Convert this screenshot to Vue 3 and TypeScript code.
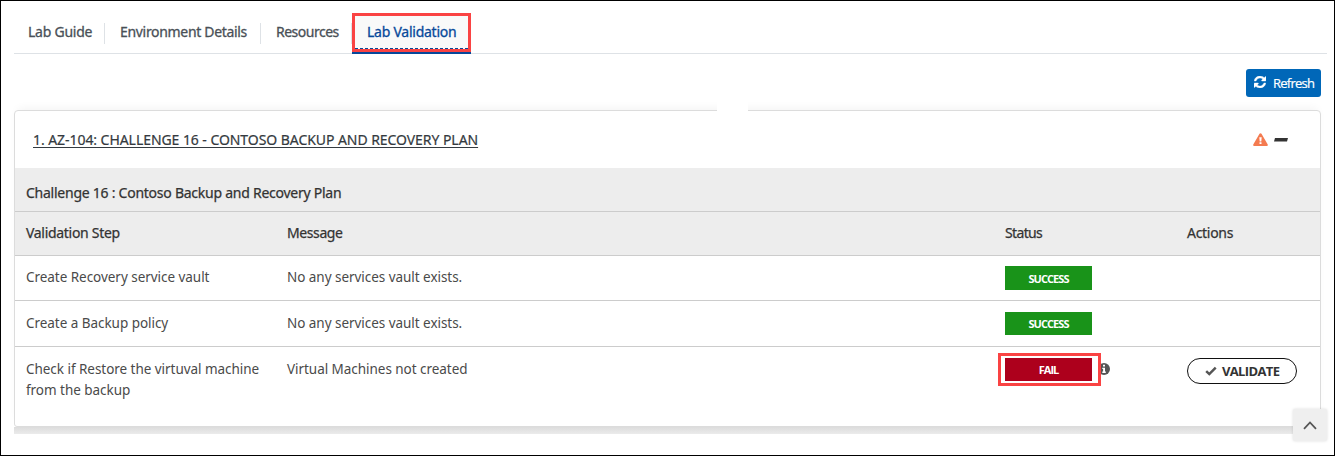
<script setup lang="ts">
interface Step {
  name: string
  message: string
  status: 'SUCCESS' | 'FAIL'
}

const tabs: { label: string; kind: string }[] = [
  { label: 'Lab Guide', kind: 'guide' },
  { label: 'Environment Details', kind: 'environment' },
  { label: 'Resources', kind: 'resources' },
  { label: 'Lab Validation', kind: 'active' },
]

const steps: Step[] = [
  { name: 'Create Recovery service vault', message: 'No any services vault exists.', status: 'SUCCESS' },
  { name: 'Create a Backup policy', message: 'No any services vault exists.', status: 'SUCCESS' },
  { name: 'Check if Restore the virtuval machine from the backup', message: 'Virtual Machines not created', status: 'FAIL' },
]
</script>

<template>
  <div class="page">
    <nav class="tabs">
      <a v-for="tab in tabs" :key="tab.kind" class="tab" :class="tab.kind"><span>{{ tab.label }}</span></a>
    </nav>

    <div class="toolbar">
      <button class="refresh">
        <svg width="12" height="12" viewBox="0 0 1536 1536" fill="#fff" stroke="#fff" stroke-width="50">
          <path d="M1511 928q0 5-1 7-64 268-268 434.500T764 1536q-146 0-282.500-55T238 1324l-129 129q-19 19-45 19t-45-19-19-45V960q0-26 19-45t45-19h448q26 0 45 19t19 45-19 45l-137 137q71 66 161 102t187 36q134 0 250-65t186-179q11-17 53-117 8-23 30-23h192q13 0 22.500 9.500t9.500 22.500zM1536 128v448q0 26-19 45t-45 19h-448q-26 0-45-19t-19-45 19-45l138-138Q969 256 768 256q-134 0-250 65T332 500q-11 17-53 117-8 23-30 23H50q-13 0-22.500-9.500T18 608v-7q65-268 270-434.500T768 0q146 0 284 55.500T1297 212l130-129q19-19 45-19t45 19 19 45z" />
        </svg>
        <span>Refresh</span>
      </button>
    </div>

    <section class="card">
      <header class="heading">
        <a class="title">1. AZ-104: CHALLENGE 16 - CONTOSO BACKUP AND RECOVERY PLAN</a>
        <svg class="warning" width="15" height="13" viewBox="0 0 15 13">
          <path d="M7.5.2c.5 0 .8.2 1 .6l6.100 10.500c.5.8 0 1.600-.9 1.600H1.300c-.9 0-1.400-.8-.9-1.600L6.500.8c.2-.4.5-.6 1-.6z" fill="#f47b50" />
          <path d="M6.300 4.200h2.400l-.4 4.200H6.700zM6.500 9.200h2v1.900h-2z" fill="#fff" />
        </svg>
        <svg class="minus" width="14" height="4" viewBox="0 0 14 4">
          <path d="M1 0h13l-1 3.500H0z" fill="#333" />
        </svg>
      </header>
      <div class="group"><span>Challenge 16 : Contoso Backup and Recovery Plan</span></div>
      <div class="row columns">
        <span class="h-step">Validation Step</span>
        <span class="h-message">Message</span>
        <span class="h-status">Status</span>
        <span class="h-actions">Actions</span>
      </div>
      <div v-for="step in steps" :key="step.name" class="row" :class="step.status.toLowerCase()">
        <span class="name">{{ step.name }}</span>
        <span class="message">{{ step.message }}</span>
        <div class="status">
          <span class="badge"><span>{{ step.status }}</span></span>
          <template v-if="step.status === 'FAIL'">
            <svg class="info" width="12" height="12" viewBox="0 0 12 12">
              <circle cx="6" cy="6" r="6" fill="#555" />
              <path d="M5 1.800h2v1.700H5zM4.300 4.700H7v3.700h.8v1.500H4.300V8.400h.8V6.100h-.8z" fill="#fff" />
            </svg>
            <i class="fail-outline"></i>
          </template>
        </div>
        <div class="actions">
          <button v-if="step.status === 'FAIL'" class="validate">
            <svg width="12" height="10" viewBox="0 0 12 10">
              <path d="M1.200 5.200 4.300 8.100 10.700 1.700" fill="none" stroke="#555" stroke-width="2.500" />
            </svg>
            <span>VALIDATE</span>
          </button>
        </div>
      </div>
    </section>
    <div class="shade"></div>
    <i class="border-gap"></i>
    <button class="to-top" aria-label="Back to top">
      <svg width="14" height="9" viewBox="0 0 14 9">
        <path d="M1 7.800 7 1.500l6 6.300" fill="none" stroke="#555" stroke-width="1.800" />
      </svg>
    </button>
  </div>
</template>

<style>
body { background: #fff; }
</style>

<style scoped>
*, *::before, *::after { box-sizing: border-box; }
.page {
  position: relative;
  width: 1335px;
  height: 456px;
  border: 1px solid #000;
  background: #fff;
  overflow: hidden;
  padding: 12px 7px 0 13px;
  font-family: "Noto Sans", "Open Sans", sans-serif;
  font-size: 14px;
  color: #333;
}
button { font-family: inherit; padding: 0; margin: 0; }
.tabs {
  display: flex;
  height: 41px;
  border-bottom: 1px solid #dee2e6;
}
.tab {
  position: relative;
  height: 40px;
  padding-left: 14px;
  line-height: 38px;
  color: #495057;
  white-space: nowrap;
  -webkit-text-stroke: .3px currentColor;
}
.tab:not(.active)::after {
  content: "";
  position: absolute;
  right: 0;
  top: 10px;
  width: 1px;
  height: 21px;
  background: #dee2e6;
}
.guide { width: 91px; letter-spacing: -.25px; }
.environment { width: 156px; padding-left: 15px; letter-spacing: -.32px; }
.resources { width: 91px; padding-left: 15px; letter-spacing: -.5px; }
.active {
  width: 119px;
  height: 41px;
  padding-left: 15px;
  background: linear-gradient(#f9f9f9, #f9f9f9) 0 0 / 100% 38px no-repeat;
  border-bottom: 2px solid #07489a;
  color: #07489a;
  letter-spacing: -.25px;
}
.active::before {
  content: "";
  position: absolute;
  left: 3px;
  right: 3px;
  top: 35px;
  border-top: 1px dashed #07489a;
}
.active::after {
  content: "";
  position: absolute;
  left: 0;
  right: 0;
  top: 0;
  height: 39px;
  border: 3px solid #fa4343;
}
.toolbar { display: flex; justify-content: flex-end; padding: 15px 6px 0 0; }
.refresh {
  display: flex;
  align-items: center;
  width: 75px;
  height: 28px;
  padding-left: 8px;
  gap: 7px;
  border: 0;
  border-radius: 3px;
  background: #0067b8;
  color: #fff;
  font-family: "Open Sans", sans-serif;
  font-size: 13px;
  letter-spacing: -.75px;
  -webkit-text-stroke: .2px currentColor;
}
.refresh svg { margin-top: -3px; }
.refresh span { margin-top: -1px; }
.card {
  width: 1307px;
  height: 317px;
  margin-top: 13px;
  border: 1px solid #dcdcdc;
  border-radius: 4px 4px 3px 3px;
  background: #fff;
  box-shadow: 0 -5px 9px -4px rgba(0, 0, 0, .055);
}
.heading { display: flex; align-items: center; height: 57px; padding: 0 32px 0 18px; }
.title {
  flex: 1;
  color: #343a40;
  text-decoration: underline;
  text-decoration-thickness: 1px;
  text-underline-offset: 2px;
  letter-spacing: -.06px;
  white-space: nowrap;
  -webkit-text-stroke: .2px currentColor;
}
.minus { margin-left: 6px; }
.group {
  height: 44px;
  padding: 7px 0 0 11px;
  line-height: 36px;
  background: #ededed;
  border-bottom: 1px solid #ccc;
  letter-spacing: -.25px;
  -webkit-text-stroke: .25px currentColor;
}
.row {
  display: grid;
  grid-template-columns: 261px 718px 182px 1fr;
  height: 45px;
  padding-left: 11px;
  border-bottom: 1px solid #ccc;
  line-height: 21px;
}
.columns {
  height: 44px;
  padding-top: 10px;
  background: #ededed;
  -webkit-text-stroke: .25px currentColor;
}
.h-step { letter-spacing: -.3px; }
.h-message { letter-spacing: -.4px; }
.h-status { letter-spacing: -.65px; }
.h-actions { letter-spacing: -.3px; }
.success + .success { height: 46px; }
.fail { height: 79px; border: 0; }
.name, .message { padding-top: 12px; color: #4a4a4a; font-size: 13.500px; letter-spacing: -.04px; }
.columns + .success .name, .columns + .success .message { padding-top: 11px; }
.name { width: 240px; }
.status { position: relative; padding-top: 10px; }
.badge {
  display: grid;
  place-items: center;
  width: 87px;
  height: 24px;
  background: #199319;
  color: #fff;
  font-family: "Open Sans", sans-serif;
  font-size: 11px;
  font-weight: 700;
  letter-spacing: -.95px;
}
.success + .success .badge, .fail .badge { height: 23px; margin-top: 1px; }
.fail .badge { background: #ad001c; }
.info { position: absolute; left: 93px; top: 16px; }
.fail-outline {
  position: absolute;
  left: -7px;
  top: 6px;
  width: 103px;
  height: 33px;
  border: 3px solid #fa4343;
}
.actions { padding-top: 11px; }
.validate {
  display: flex;
  align-items: center;
  width: 110px;
  height: 26px;
  padding-left: 17px;
  gap: 5px;
  border: 1px solid #111;
  border-radius: 13px;
  background: #fff;
  color: #333;
  font-family: "Open Sans", sans-serif;
  font-size: 13px;
  font-weight: 700;
  letter-spacing: -.65px;
}
.shade {
  width: 1307px;
  height: 7px;
  background: linear-gradient(#dcdcdc, #ebebeb);
}
.border-gap {
  position: absolute;
  left: 716px;
  top: 98px;
  width: 31px;
  height: 14px;
  background: #fff;
}
.to-top {
  position: absolute;
  left: 1292px;
  top: 408px;
  display: grid;
  place-items: center;
  width: 34px;
  height: 32px;
  border: 0;
  border-radius: 2px;
  background: #efefef;
  box-shadow: 0 0 3px rgba(0, 0, 0, .14);
}
</style>
